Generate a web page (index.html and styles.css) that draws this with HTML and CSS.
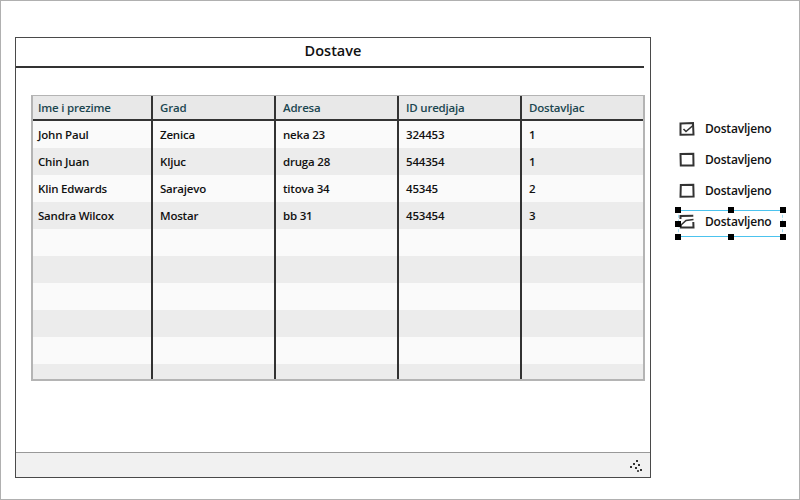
FILE: index.html
```html
<!DOCTYPE html>
<html>
<head>
<meta charset="utf-8">
<link rel="stylesheet" href="styles.css">
</head>
<body>
<div class="page">
  <div class="window">
    <div class="title">Dostave</div>
    <div class="content">
      <div class="table">
        <div class="cols">
          <div class="col">
            <div class="th">Ime i prezime</div>
            <div class="td">John Paul</div>
            <div class="td">Chin Juan</div>
            <div class="td">Klin Edwards</div>
            <div class="td">Sandra Wilcox</div>
            <div class="td"></div><div class="td"></div><div class="td"></div><div class="td"></div><div class="td"></div><div class="td"></div>
          </div>
          <div class="col">
            <div class="th">Grad</div>
            <div class="td">Zenica</div>
            <div class="td">Kljuc</div>
            <div class="td">Sarajevo</div>
            <div class="td">Mostar</div>
            <div class="td"></div><div class="td"></div><div class="td"></div><div class="td"></div><div class="td"></div><div class="td"></div>
          </div>
          <div class="col">
            <div class="th">Adresa</div>
            <div class="td">neka 23</div>
            <div class="td">druga 28</div>
            <div class="td">titova 34</div>
            <div class="td">bb 31</div>
            <div class="td"></div><div class="td"></div><div class="td"></div><div class="td"></div><div class="td"></div><div class="td"></div>
          </div>
          <div class="col">
            <div class="th">ID uredjaja</div>
            <div class="td">324453</div>
            <div class="td">544354</div>
            <div class="td">45345</div>
            <div class="td">453454</div>
            <div class="td"></div><div class="td"></div><div class="td"></div><div class="td"></div><div class="td"></div><div class="td"></div>
          </div>
          <div class="col last">
            <div class="th">Dostavljac</div>
            <div class="td">1</div>
            <div class="td">1</div>
            <div class="td">2</div>
            <div class="td">3</div>
            <div class="td"></div><div class="td"></div><div class="td"></div><div class="td"></div><div class="td"></div><div class="td"></div>
          </div>
        </div>
      </div>
    </div>
    <div class="footer">
      <svg class="grip" width="14" height="12" viewBox="0 0 14 12">
        <rect x="7" y="0" width="2" height="2" fill="#333"/>
        <rect x="4" y="3" width="2" height="2" fill="#333"/>
        <rect x="9" y="4" width="2" height="2" fill="#333"/>
        <rect x="1" y="6" width="2" height="2" fill="#333"/>
        <rect x="6" y="7" width="2" height="2" fill="#333"/>
        <rect x="11" y="9" width="2" height="2" fill="#333"/>
        <rect x="8" y="10" width="2" height="2" fill="#555"/>
      </svg>
    </div>
  </div>
  <div class="checks">
    <div class="check">
      <svg width="16" height="15" viewBox="0 0 16 15"><path d="M1.5 2.5 L14 2 L14.5 13.5 L1.5 13.8 Z" fill="none" stroke="#333" stroke-width="2"/><path d="M4.5 8 L7 10.5 L14.5 4" fill="none" stroke="#333" stroke-width="1.6"/></svg>
      <span>Dostavljeno</span>
    </div>
    <div class="check">
      <svg width="16" height="15" viewBox="0 0 16 15"><path d="M1.5 2 L14.3 1.8 L14.5 13.5 L1.8 13.5 Z" fill="none" stroke="#333" stroke-width="2"/></svg>
      <span>Dostavljeno</span>
    </div>
    <div class="check">
      <svg width="16" height="15" viewBox="0 0 16 15"><path d="M1.8 2 L14.3 1.8 L14.6 13.6 L1.5 13.8 Z" fill="none" stroke="#333" stroke-width="2"/></svg>
      <span>Dostavljeno</span>
    </div>
    <div class="check selected">
      <svg width="16" height="15" viewBox="0 0 16 15"><path d="M1.5 5 L1.5 2 L14.3 1.8 M14.3 8 L14.5 13.5 L1.8 13.5 L1.8 10" fill="none" stroke="#333" stroke-width="2"/><path d="M2 11 L7 6.5 L14.5 5.5" fill="none" stroke="#333" stroke-width="1.6"/></svg>
      <span>Dostavljeno</span>
      <div class="sel">
        <i class="h tl"></i><i class="h tm"></i><i class="h tr"></i>
        <i class="h ml"></i><i class="h mr"></i>
        <i class="h bl"></i><i class="h bm"></i><i class="h br"></i>
      </div>
    </div>
  </div>
</div>
</body>
</html>
```

FILE: styles.css
```css
* { box-sizing: border-box; }
html, body { margin: 0; padding: 0; background: #fff; }
body {
  font-family: "Open Sans", "Liberation Sans", sans-serif;
  font-weight: 600;
  color: #111;
}
.page {
  width: 800px;
  height: 500px;
  border: 1px solid #b0b0b0;
  display: flex;
  align-items: flex-start;
  padding: 36px 0 0 14px;
}
.window {
  width: 636px;
  height: 441px;
  border: 1px solid #4a4a4a;
  display: flex;
  flex-direction: column;
}
.title {
  height: 30px;
  margin-right: 6px;
  border-bottom: 2px solid #333;
  text-align: center;
  font-size: 14.5px;
  line-height: 26px;
  padding-left: 6px;
  color: #111;
}
.content {
  flex: 1;
  padding: 27px 5px 0 15px;
}
.table {
  height: 286px;
  border: 2px solid #b4b4b4;
  border-top-width: 1px;
  overflow: hidden;
  background: #fafafa;
}
.cols {
  display: flex;
  height: 100%;
}
.col {
  width: 123px;
  border-right: 2px solid #333;
  flex: none;
}
.col:first-child { width: 120px; }
.col.last { border-right: none; flex: 1; }
.th {
  height: 25px;
  background: #e8e8e8;
  border-bottom: 2px solid #333;
  color: #1b4650;
  font-size: 11.5px;
  line-height: 23px;
  padding-left: 5px;
  letter-spacing: -0.2px;
}
.col:not(:first-child) .th, .col:not(:first-child) .td { padding-left: 7px; }
.td {
  height: 27px;
  font-size: 11.5px;
  line-height: 27px;
  padding-left: 5px;
  background: #fafafa;
  white-space: nowrap;
  letter-spacing: -0.2px;
}
.td:nth-child(odd) { background: #ececec; }
.footer {
  height: 25px;
  background: #f1f1f1;
  border-top: 1px solid #999;
  display: flex;
  justify-content: flex-end;
  align-items: center;
  padding-right: 7px;
}
.grip { display: block; margin-top: 2px; }
.checks {
  margin-left: 28px;
  padding-top: 76px;
  display: flex;
  flex-direction: column;
}
.check {
  position: relative;
  display: flex;
  align-items: center;
  height: 31px;
  font-size: 12px;
  color: #111;
  letter-spacing: -0.2px;
}
.check svg { margin-right: 10px; flex: none; }
.check span { line-height: 14px; }
.sel {
  position: absolute;
  left: -1px;
  top: 4px;
  width: 105px;
  height: 27px;
  border-top: 1px solid #4cc3ee;
  border-bottom: 1px solid #4cc3ee;
  border-left: 1px dashed #9ddcf3;
  border-right: 1px dashed #9ddcf3;
}
.h {
  position: absolute;
  width: 6px;
  height: 6px;
  background: #000;
}
.tl { left: -4px; top: -4px; }
.tm { left: 49px; top: -4px; }
.tr { right: -4px; top: -4px; }
.ml { left: -4px; top: 10px; }
.mr { right: -4px; top: 10px; }
.bl { left: -4px; bottom: -4px; }
.bm { left: 49px; bottom: -4px; }
.br { right: -4px; bottom: -4px; }
```
